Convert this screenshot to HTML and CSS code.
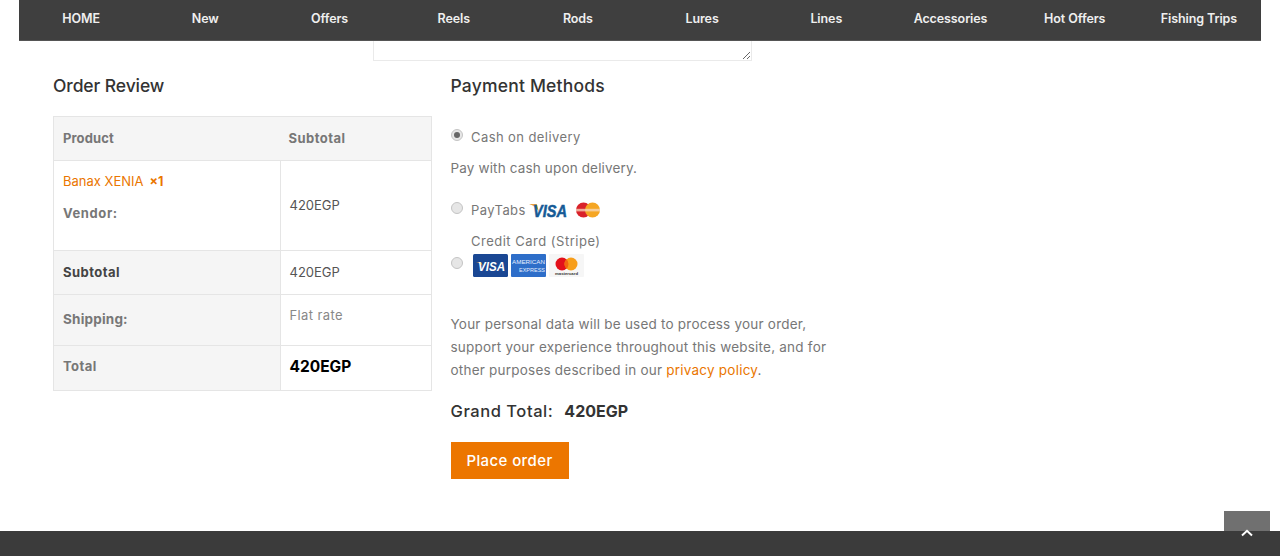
FILE: index.html
```html
<!DOCTYPE html>
<html lang="en">
<head>
<meta charset="utf-8">
<title>Checkout</title>
<link rel="stylesheet" href="styles.css">
</head>
<body>
<div class="page">
  <nav class="nav">
    <a>HOME</a><a>New</a><a>Offers</a><a>Reels</a><a>Rods</a><a>Lures</a><a>Lines</a><a>Accessories</a><a>Hot Offers</a><a>Fishing Trips</a>
  </nav>
  <div class="notes"><textarea class="notes-field" aria-label="Order notes"></textarea></div>
  <main class="columns">
    <section class="review">
      <h3 class="heading">Order Review</h3>
      <table class="order">
        <thead>
          <tr class="row-head"><th class="c1">Product</th><th class="c2 head-sub">Subtotal</th></tr>
        </thead>
        <tbody>
          <tr class="row-item">
            <td class="c1 item-cell">
              <div class="item-line"><a class="link">Banax XENIA</a><strong class="qty">×1</strong></div>
              <div class="vendor">Vendor:</div>
            </td>
            <td class="c2 val">420EGP</td>
          </tr>
          <tr class="row-sub"><th class="c1 dark">Subtotal</th><td class="c2 val">420EGP</td></tr>
          <tr class="row-ship"><th class="c1 big">Shipping:</th><td class="c2 rate">Flat rate</td></tr>
          <tr class="row-total"><th class="c1 total-label">Total</th><td class="c2 total">420EGP</td></tr>
        </tbody>
      </table>
    </section>
    <section class="pay">
      <h3 class="heading heading-wide">Payment Methods</h3>
      <div class="method m1">
        <input class="radio" type="radio" name="pm" checked aria-label="Cash on delivery">
        <span class="m-label">Cash on delivery</span>
      </div>
      <p class="desc">Pay with cash upon delivery.</p>
      <div class="method m2">
        <input class="radio" type="radio" name="pm" aria-label="PayTabs">
        <span class="m-label">PayTabs</span>
        <svg class="visa-small" width="40" height="16" viewBox="0 0 40 16">
          <path d="M0 2h6.500c1 0 1.600.5 1.800 1.400L10 10C8 6 4.500 3.500 0 2z" fill="#e9a23b"/>
          <text x="4" y="14.500" class="visa-txt" font-size="16" textLength="34" lengthAdjust="spacingAndGlyphs">VISA</text>
        </svg>
        <svg class="mc-small" width="26" height="16" viewBox="0 0 26 16">
          <circle cx="8.500" cy="8" r="7.500" fill="#d9222a"/>
          <circle cx="17.500" cy="8" r="7.500" fill="#f5a623"/>
          <rect x="1" y="6.800" width="24" height="2.600" fill="#f7d9c0" opacity=".75"/>
        </svg>
      </div>
      <div class="method m3">
        <input class="radio" type="radio" name="pm" aria-label="Credit Card (Stripe)">
        <div class="m-stack">
          <span class="m-label m-label-wide">Credit Card (Stripe)</span>
          <div class="cards">
            <svg width="35" height="23" viewBox="0 0 35 23">
              <rect width="35" height="23" rx="1.500" fill="#1a4793"/>
              <path d="M3 8h5l2 4C8 10 6 8.500 3 8z" fill="#e9a23b"/>
              <text x="5" y="17" class="visa-card" font-size="13" textLength="27" lengthAdjust="spacingAndGlyphs">VISA</text>
            </svg>
            <svg width="35" height="23" viewBox="0 0 35 23">
              <rect width="35" height="23" rx="1" fill="#2e6ec9"/>
              <text x="1" y="9.500" class="amex" font-size="6" textLength="33" lengthAdjust="spacingAndGlyphs">AMERICAN</text>
              <text x="8" y="18" class="amex" font-size="6" textLength="26" lengthAdjust="spacingAndGlyphs">EXPRESS</text>
            </svg>
            <svg width="35" height="23" viewBox="0 0 35 23">
              <rect width="35" height="23" rx="1" fill="#f6f6f6"/>
              <circle cx="13" cy="10" r="6.500" fill="#e3111b"/>
              <circle cx="22" cy="10" r="6.500" fill="#f79e1b"/>
              <path d="M17.500 5.300a6.500 6.500 0 0 1 0 9.400a6.500 6.500 0 0 1 0-9.400z" fill="#f2660f"/>
              <text x="6" y="21" class="mc-txt" font-size="4" textLength="23" lengthAdjust="spacingAndGlyphs">mastercard</text>
            </svg>
          </div>
        </div>
      </div>
      <p class="privacy">Your personal data will be used to process your order, support your experience throughout this website, and for other purposes described in our <a class="link">privacy policy</a>.</p>
      <div class="grand"><span class="grand-label">Grand Total:</span><strong class="grand-val">420EGP</strong></div>
      <button class="place" type="button">Place order</button>
    </section>
  </main>
  <footer class="footer"></footer>
  <a class="top" aria-label="Back to top">
    <svg width="12" height="8" viewBox="0 0 12 8"><path d="M1 6.500 6 1.800l5 4.700" fill="none" stroke="#fff" stroke-width="2"/></svg>
  </a>
</div>
</body>
</html>
```
FILE: styles.css
```css
* { box-sizing: border-box; }
html, body { margin: 0; padding: 0; height: 100%; }
body {
  background: #fff;
  color: #777;
  font-family: Inter, "Open Sans", "Liberation Sans", sans-serif;
  font-size: 14px;
  overflow: hidden;
}
.page { position: relative; height: 556px; display: flex; flex-direction: column; overflow: hidden; }

.nav {
  flex: none;
  margin: 0 19px;
  height: 41px;
  background: #3f3f3f;
  border-bottom: 1px solid #555;
  display: grid;
  grid-template-columns: repeat(10, 1fr);
  align-items: center;
  padding-bottom: 3px;
}
.nav a { text-align: center; color: #efefef; font-size: 12.5px; font-weight: 600; letter-spacing: -.1px; }

.notes { flex: none; height: 20px; padding-left: 373px; }
.notes-field {
  display: block;
  width: 379px;
  height: 20px;
  margin: 0;
  padding: 0;
  border: 1px solid #eaeaea;
  border-top: 0;
  background: #fff;
  outline: 0;
}

.columns { flex: 1; display: flex; gap: 18.5px; padding-left: 53px; min-height: 0; }
.review { flex: none; width: 379px; }
.pay { flex: none; width: 385px; }

.heading {
  margin: 14px 0 0;
  height: 22px;
  line-height: 22px;
  font-size: 17.5px;
  font-weight: 500;
  color: #333;
  letter-spacing: -.1px;
}
.heading-wide { letter-spacing: .2px; }

.order {
  width: 379px;
  margin-top: 19px;
  border-collapse: collapse;
  table-layout: fixed;
  font-size: 13px;
}
.order th, .order td { border: 1px solid #e5e5e5; padding: 0 9px 2px; text-align: left; font-weight: 400; }
.order th { font-weight: 700; color: #777; letter-spacing: .45px; }
.c1 { width: 226.5px; }
.row-head th { height: 44px; background: #f5f5f5; }
.order .row-head th.c1 { letter-spacing: .1px; border-right-color: transparent; }
.order .head-sub { border-left-color: transparent; padding-left: 8px; }
.row-item { height: 90px; }
.order .item-cell { vertical-align: top; padding-top: 11px; }
.item-line { display: flex; align-items: center; gap: 6px; height: 18px; }
.link { color: #ea7600; }
.qty { color: #ea7600; font-size: 12.5px; font-weight: 700; }
.vendor { margin-top: 14px; height: 18px; line-height: 18px; font-weight: 700; color: #777; letter-spacing: .6px; }
.val { color: #555; font-size: 13px; }
.row-sub { height: 44px; }
.row-sub th, .row-ship th, .row-total th { background: #f5f5f5; }
.order .dark { color: #444; }
.row-ship { height: 51px; }
.order .rate { vertical-align: top; padding-top: 12px; color: #888; letter-spacing: .4px; }
.order .big { font-size: 13.5px; letter-spacing: .2px; }
.row-total { height: 45px; }
.order .total-label { padding-bottom: 4px; }
.order .total { font-size: 15.5px; font-weight: 700; color: #000; padding-bottom: 4px; }

.method { display: flex; align-items: center; }
.radio {
  flex: none;
  appearance: none;
  display: grid;
  place-items: center;
  width: 12px;
  height: 12px;
  margin: 0 8px 0 0.5px;
  border: 1px solid #c4c4c4;
  border-radius: 50%;
  background: #e6e6e6;
}
.radio:checked::after {
  content: "";
  width: 6px;
  height: 6px;
  border-radius: 50%;
  background: #666;
}
.m-label { color: #777; font-size: 13px; line-height: 18px; letter-spacing: .42px; }
.m-label-wide { letter-spacing: .5px; }
.m1 { margin-top: 30px; height: 20px; }
.m1 .radio { margin-top: -4px; }
.desc { margin: 11px 0 0; height: 20px; line-height: 20px; font-size: 13.5px; color: #777; letter-spacing: .15px; }
.m2 { margin-top: 22px; height: 20px; }
.m2 .radio { margin-top: -4px; }
.visa-small { margin-left: 3px; }
.mc-small { margin-left: 6px; }
.visa-txt { font-family: "Liberation Sans", sans-serif; font-weight: 700; font-style: italic; fill: #155a96; stroke: #155a96; stroke-width: .5px; }
.visa-card { font-family: "Liberation Sans", sans-serif; font-weight: 700; font-style: italic; fill: #fff; }
.amex { font-family: "Liberation Sans", sans-serif; fill: #e6efff; }
.mc-txt { font-family: "Liberation Sans", sans-serif; font-weight: 700; fill: #333; }
.m3 { margin-top: 12px; align-items: flex-end; }
.m3 .radio { margin-bottom: 8px; }
.m-stack { display: flex; flex-direction: column; }
.cards { display: flex; gap: 3px; margin: 4px 0 0 2px; }

.privacy { margin: 36px 0 0; width: 385px; font-size: 13.5px; line-height: 23px; color: #777; letter-spacing: .22px; }
.grand { display: flex; gap: 11px; align-items: center; margin-top: 16px; height: 26px; color: #333; }
.grand-label { font-size: 16.5px; font-weight: 500; letter-spacing: .55px; }
.grand-val { font-size: 16px; font-weight: 700; }
.place {
  display: block;
  margin-top: 18px;
  width: 118px;
  height: 37px;
  padding: 0;
  border: 0;
  background: #ec7600;
  color: #fff;
  font: 500 15px Inter, "Open Sans", sans-serif;
  letter-spacing: .4px;
}

.footer { flex: none; height: 25px; background: #3b3b3b; }
.top {
  position: absolute;
  left: 1224px;
  top: 511px;
  width: 46px;
  height: 20px;
  background: #707070;
  display: flex;
  justify-content: center;
  align-items: flex-start;
  padding-top: 18px;
}
```
